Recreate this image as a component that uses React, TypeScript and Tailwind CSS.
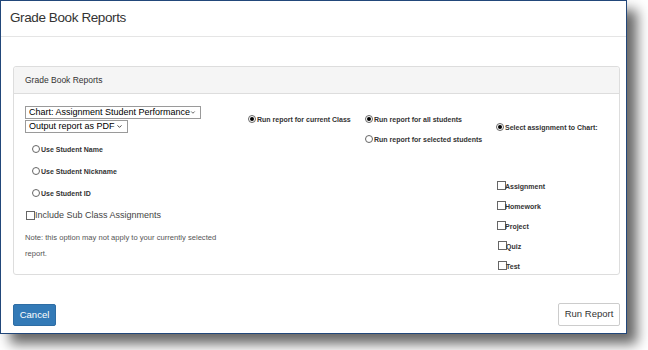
import { ChevronDown } from "lucide-react";

const font = "font-['Liberation_Sans',Arial,sans-serif]";

function Radio({ checked = false }: { checked?: boolean }) {
  return (
    <span className="w-[8px] h-[8px] shrink-0 rounded-full border border-[#666] bg-white flex items-center justify-center">
      {checked && <span className="w-[4px] h-[4px] rounded-full bg-black" />}
    </span>
  );
}

function RadioLabel({ label, checked }: { label: string; checked?: boolean }) {
  return (
    <div className="flex items-end gap-[1px] leading-none">
      <Radio checked={checked} />
      <span className="text-[7px] font-bold text-[#333] whitespace-nowrap">{label}</span>
    </div>
  );
}

function Check({ label, className = "" }: { label: string; className?: string }) {
  return (
    <div className={`flex items-end leading-none ${className}`}>
      <span className="w-[9px] h-[9px] shrink-0 border border-[#666] bg-white" />
      <span className="text-[7px] font-bold text-[#333] whitespace-nowrap -ml-[1px]">
        {label}
      </span>
    </div>
  );
}

function FakeSelect({ label, width }: { label: string; width: string }) {
  return (
    <div
      className={`${width} h-[13px] border border-[#9a9a9a] bg-white flex items-center justify-between pl-[3px] pr-[4px]`}
    >
      <span className="text-[9px] text-black whitespace-nowrap leading-none">{label}</span>
      <ChevronDown size={7} strokeWidth={3} className="text-[#333]" />
    </div>
  );
}

export default function App() {
  return (
    <div className={`w-[648px] h-[350px] bg-white overflow-hidden ${font}`}>
      <div className="w-[627px] h-[334px] border border-[#22477a] bg-white flex flex-col shadow-[10px_10px_12px_rgba(0,0,0,0.6)]">
        {/* Header */}
        <div className="h-[36px] shrink-0 flex items-center pl-[9px] border-b border-[#e5e5e5]">
          <h1 className="text-[13.5px] tracking-[-0.4px] text-[#333]">Grade Book Reports</h1>
        </div>

        {/* Body */}
        <div className="flex-1 pl-[12px] pr-[6px] pt-[29px] flex flex-col">
          <div className="h-[209px] border border-[#ddd] rounded-[3px] flex flex-col">
            <div className="h-[27px] shrink-0 bg-[#f5f5f5] border-b border-[#ddd] rounded-t-[3px] flex items-center pl-[11px]">
              <span className="text-[8.5px] text-[#333]">Grade Book Reports</span>
            </div>

            <div className="flex-1 flex pl-[11px]">
              {/* Left column */}
              <div className="w-[223px] shrink-0 flex flex-col pt-[12px]">
                <FakeSelect label="Chart: Assignment Student Performance" width="w-[176px]" />
                <div className="mt-[1px]">
                  <FakeSelect label="Output report as PDF" width="w-[103px]" />
                </div>
                <div className="pl-[7px] mt-[12px] flex flex-col gap-[14px]">
                  <RadioLabel label="Use Student Name" />
                  <RadioLabel label="Use Student Nickname" />
                  <RadioLabel label="Use Student ID" />
                </div>
                <div className="flex items-end leading-none mt-[14px] pl-[1px]">
                  <span className="w-[9px] h-[9px] shrink-0 border border-[#666] bg-white" />
                  <span className="text-[9px] text-[#444] whitespace-nowrap">
                    Include Sub Class Assignments
                  </span>
                </div>
                <p className="mt-[10px] text-[7.6px] leading-[16px] text-[#555]">
                  Note: this option may not apply to your currently selected
                  <br />
                  report.
                </p>
              </div>

              {/* Current class */}
              <div className="w-[116px] shrink-0 pt-[21px]">
                <RadioLabel label="Run report for current Class" checked />
              </div>

              {/* Students */}
              <div className="w-[132px] shrink-0 pt-[21px] pl-[1px] flex flex-col gap-[12px]">
                <RadioLabel label="Run report for all students" checked />
                <RadioLabel label="Run report for selected students" />
              </div>

              {/* Assignments */}
              <div className="flex-1 pt-[29px] flex flex-col">
                <RadioLabel label="Select assignment to Chart:" checked />
                <div className="mt-[50px] flex flex-col gap-[11px]">
                  <Check label="Assignment" className="pl-[1px]" />
                  <Check label="Homework" className="pl-[1px]" />
                  <Check label="Project" className="pl-[1px]" />
                  <Check label="Quiz" className="pl-[2px]" />
                  <Check label="Test" className="pl-[2px]" />
                </div>
              </div>
            </div>
          </div>

          {/* Footer */}
          <div className="mt-[28px] flex justify-between items-start">
            <button className="w-[43px] h-[22px] mt-[1px] bg-[#337ab7] border border-[#2e6da4] rounded-[2px] text-white text-[9.5px] flex items-center justify-center">
              Cancel
            </button>
            <button className="w-[62px] h-[23px] bg-white border border-[#ccc] rounded-[2px] text-[#333] text-[9.5px] flex items-center justify-center">
              Run Report
            </button>
          </div>
        </div>
      </div>
    </div>
  );
}
